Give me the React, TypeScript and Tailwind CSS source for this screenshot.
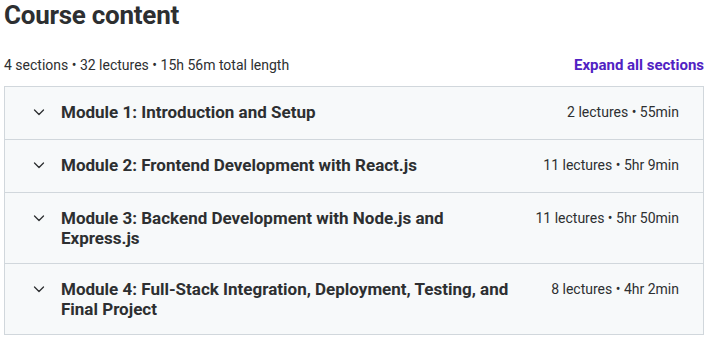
const modules = [
  { title: "Module 1: Introduction and Setup", meta: "2 lectures • 55min" },
  { title: "Module 2: Frontend Development with React.js", meta: "11 lectures • 5hr 9min" },
  { title: "Module 3: Backend Development with Node.js and Express.js", meta: "11 lectures • 5hr 50min" },
  {
    title: "Module 4: Full-Stack Integration, Deployment, Testing, and Final Project",
    meta: "8 lectures • 4hr 2min",
  },
];

function Chevron() {
  return (
    <svg width="12" height="12" viewBox="0 0 12 12" className="shrink-0 mt-[4px]">
      <path d="M1.5 4 L6 8.5 L10.5 4" fill="none" stroke="#2d2f31" strokeWidth="1.3" strokeLinecap="round" strokeLinejoin="round" />
    </svg>
  );
}

export default function App() {
  return (
    <div className="w-[708px] h-[341px] bg-white text-[#2d2f31] font-['Roboto',sans-serif] px-[4px] overflow-hidden">
      {/* Heading */}
      <h2 className="text-[26px] leading-[30px] font-bold tracking-[-0.01em]">Course content</h2>

      <div className="flex items-end justify-between mt-[25px] h-[20px]">
        <span className="text-[14px] leading-[20px]">4 sections • 32 lectures • 15h 56m total length</span>
        <button className="text-[15px] leading-[20px] font-bold text-[#5022c3]">Expand all sections</button>
      </div>

      {/* Sections */}
      <div className="mt-[11px] w-[700px] border border-[#d1d7dc] bg-[#f7f9fa]">
        {modules.map((m, i) => (
          <div
            key={m.title}
            className={`flex items-start pl-[28px] pr-[24px] py-[15px] ${i > 0 ? "border-t border-[#d1d7dc]" : ""}`}
          >
            <Chevron />
            <div className="ml-[16px] w-[452px] min-h-[22px] text-[17px] leading-[20px] font-bold">{m.title}</div>
            <div className="ml-auto text-[14px] leading-[20px] whitespace-nowrap">{m.meta}</div>
          </div>
        ))}
      </div>
    </div>
  );
}
